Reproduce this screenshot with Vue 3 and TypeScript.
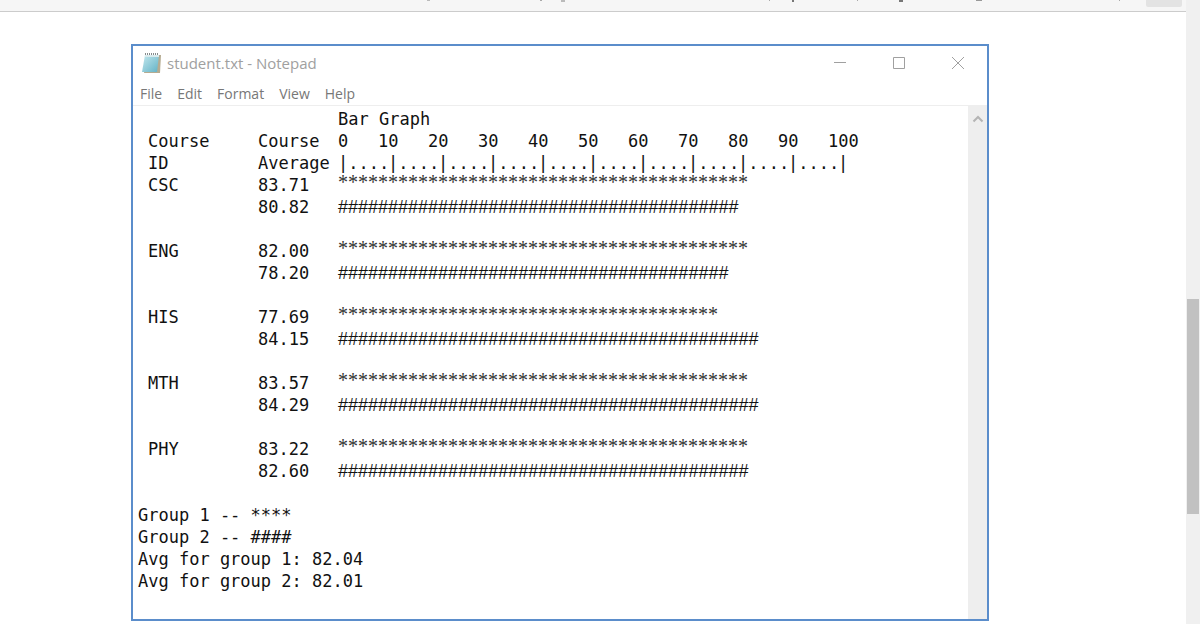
<script setup lang="ts">
interface Course { id: string; first: string; second: string; stars: number; hashes: number }

const menus: string[] = ['File', 'Edit', 'Format', 'View', 'Help']
const courses: Course[] = [
  { id: 'CSC', first: '83.71', second: '80.82', stars: 41, hashes: 40 },
  { id: 'ENG', first: '82.00', second: '78.20', stars: 41, hashes: 39 },
  { id: 'HIS', first: '77.69', second: '84.15', stars: 38, hashes: 42 },
  { id: 'MTH', first: '83.57', second: '84.29', stars: 41, hashes: 42 },
  { id: 'PHY', first: '83.22', second: '82.60', stars: 41, hashes: 41 },
]
const scale: number[] = Array.from({ length: 11 }, (_, i) => i * 10)
const summary = [
  'Group 1 -- ****',
  'Group 2 -- ####',
  'Avg for group 1: 82.04',
  'Avg for group 2: 82.01',
]
</script>

<template>
  <div class="page">
    <div class="content">
      <header class="toolbar">
        <svg class="marks" width="740" height="3" viewBox="0 0 740 3" aria-hidden="true">
          <path d="M27 0h3v1h-3zM161 0h4v2h-4z" fill="#bbb" />
          <path d="M140 0h2v1h-2zM369 0h1v1h-1zM457 0h1v1h-1zM719 0h1v1h-1z" fill="#aaa" />
          <path d="M392 0h2v2h-2zM499 0h4v2h-4z" fill="#777" />
          <path d="M576 0h6v1h-6z" fill="#999" />
        </svg>
        <button class="tool" type="button" aria-label="Options"></button>
      </header>
      <main class="window">
        <div class="titlebar">
          <svg width="22" height="22" viewBox="0 0 22 22" aria-hidden="true">
            <defs>
              <linearGradient id="sheet" x1="0" y1="0" x2="1" y2="1">
                <stop offset="0" stop-color="#c4e8ee" />
                <stop offset="1" stop-color="#62b2c6" />
              </linearGradient>
            </defs>
            <path d="M6 3h14l-1 18H3z" fill="#b5ab91" />
            <path d="M4 3h14l-2 17H1z" fill="url(#sheet)" />
            <path d="M4 3h14v2H4z" fill="#d8eaed" />
            <path d="M4 2h14" fill="none" stroke="#858b8c" stroke-dasharray="1 1" stroke-width="2" />
          </svg>
          <h1 class="title">student.txt - Notepad</h1>
          <div class="controls">
            <button type="button" aria-label="Minimize"><svg width="14" height="14" viewBox="0 0 14 14"><path d="M1 6.5h12" /></svg></button>
            <button type="button" aria-label="Maximize"><svg width="14" height="14" viewBox="0 0 14 14"><path d="M1.500 1.500h11v11h-11z" /></svg></button>
            <button type="button" aria-label="Close"><svg width="14" height="14" viewBox="0 0 14 14"><path d="M1 1l12 12M13 1L1 13" /></svg></button>
          </div>
        </div>
        <nav class="menu">
          <button v-for="m in menus" :key="m" type="button">{{ m }}</button>
        </nav>
        <div class="editor">
          <div class="text">
            <table>
              <thead>
                <tr><td></td><td></td><th>Bar Graph</th></tr>
                <tr>
                  <th>Course</th><th>Course</th>
                  <th><div class="axis labels"><span v-for="n in scale" :key="n">{{ n }}</span></div></th>
                </tr>
                <tr>
                  <th>ID</th><th>Average</th>
                  <th><div class="axis"><span v-for="n in scale" :key="n">{{ n < 100 ? '|....' : '|' }}</span></div></th>
                </tr>
              </thead>
              <tbody v-for="c in courses" :key="c.id">
                <tr><td>{{ c.id }}</td><td>{{ c.first }}</td><td class="stars">{{ '*'.repeat(c.stars) }}</td></tr>
                <tr><td></td><td>{{ c.second }}</td><td class="hashes">{{ '#'.repeat(c.hashes) }}</td></tr>
                <tr><td colspan="3"></td></tr>
              </tbody>
            </table>
            <p v-for="line in summary" :key="line">{{ line }}</p>
          </div>
          <div class="scroll">
            <button type="button" aria-label="Scroll up"><svg width="12" height="8" viewBox="0 0 12 8"><path d="M1.500 6.500L6 2l4.500 4.500" /></svg></button>
          </div>
        </div>
      </main>
    </div>
    <div class="page-scroll"><div class="thumb"></div></div>
  </div>
</template>

<style>
body { margin: 0; background: #fff; }
</style>

<style scoped>
.page { display: flex; min-height: 100vh; font-family: "Open Sans", "Noto Sans", sans-serif; }
.content { flex: 1; min-width: 0; }
.toolbar { display: flex; justify-content: space-between; height: 11px; padding-right: 4px; background: #f6f6f6; border-bottom: 1px solid #ccc; }
.marks { flex: none; margin-left: 400px; }
button { padding: 0; border: 0; background: none; font: inherit; color: inherit; }
.tool { width: 36px; height: 7px; background: #e3e3e3; border-radius: 0 0 2px 2px; }
.window { box-sizing: border-box; margin: 32px 197px 2px 131px; border: 2px solid #5b8dcb; }
.titlebar { display: flex; align-items: center; height: 34px; padding-left: 8px; color: #a0a0a0; }
.title { flex: 1; margin: 0 0 0 4px; font-size: 15px; font-weight: 400; line-height: 20px; }
.controls { display: flex; }
.controls button { display: flex; justify-content: center; width: 59px; }
.controls path { fill: none; stroke: #a0a0a0; }
.menu { display: flex; gap: 15px; height: 25px; padding-left: 7px; color: #777; font-size: 14px; line-height: 28px; }
.editor { display: flex; border-top: 1px solid #eee; }
.text { flex: 1; padding: 2px 0 27px 5px; color: #111; font-family: "DejaVu Sans Mono", "Liberation Mono", monospace; font-size: 17px; line-height: 22px; }
table { border-collapse: collapse; table-layout: fixed; }
tr { height: 22px; }
th, td { padding: 0; font-weight: 400; text-align: left; vertical-align: top; white-space: nowrap; }
th:first-child, td:first-child { width: 110px; padding-left: 10px; }
th:nth-child(2), td:nth-child(2) { width: 80px; }
.axis { display: grid; grid-template-columns: repeat(11, 50px); }
.labels { grid-template-columns: 40px repeat(10, 50px); }
.stars { color: #333; font-family: "Liberation Serif", serif; font-size: 20px; line-height: 16px; }
.hashes { font-family: "Liberation Sans", Arial, sans-serif; font-size: 18px; }
p { margin: 0; }
.scroll { width: 19px; padding-top: 7px; background: #eee; text-align: center; line-height: 8px; }
.scroll path { fill: none; stroke: #b4b4b4; stroke-width: 2; }
.page-scroll { width: 14px; padding-top: 299px; box-sizing: border-box; background: #f0f0f0; }
.thumb { height: 215px; margin: 0 1px; background: #c1c1c1; }
</style>
